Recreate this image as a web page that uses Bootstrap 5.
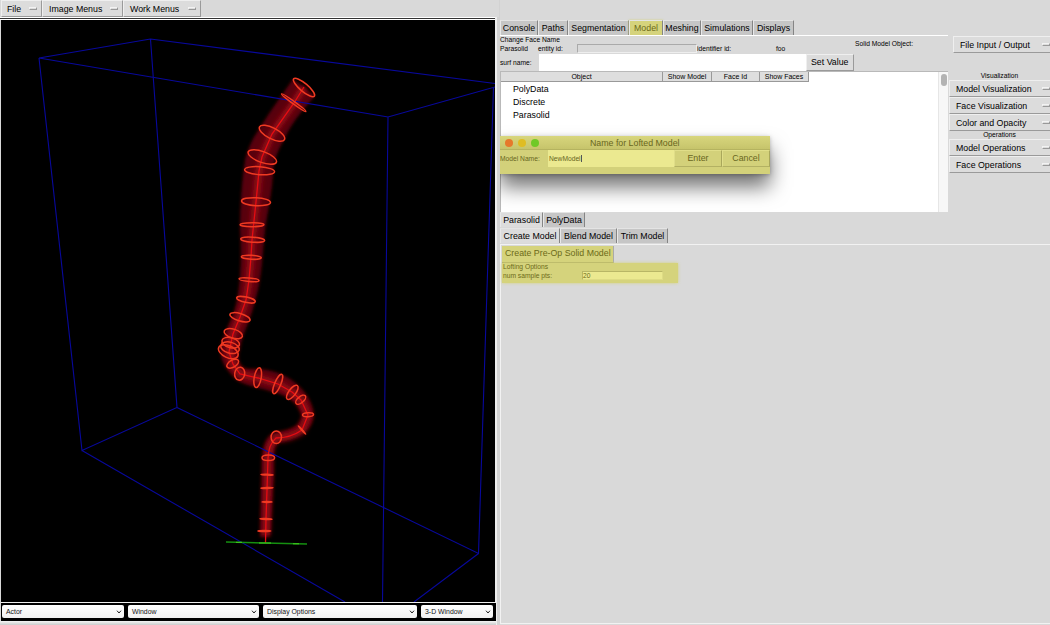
<!DOCTYPE html>
<html lang="en">
<head>
<meta charset="utf-8">
<title>Model workspace</title>
<link href="https://cdn.jsdelivr.net/npm/bootstrap@5.3.0/dist/css/bootstrap.min.css" rel="stylesheet">
<style>
body{width:1050px;height:625px;overflow:hidden;background:#d9d9d9;color:#000;font:8.8px/10px "Liberation Sans",Arial,sans-serif}
.menus{height:17px;width:499px;padding-left:1px}
.tk{height:17px;background:#dcdcdc;border:1px solid #efefef;border-right-color:#9a9a9a;border-bottom-color:#9a9a9a;padding:0 4px 0 5px;white-space:nowrap;color:#000}
.dash{width:8px;height:3px;background:#ddd;border:1px solid #f3f3f3;border-bottom-color:#999;border-right-color:#999;flex:none}
.left-pane{width:500px;height:625px;flex:none;background:linear-gradient(90deg,#d9d9d9 495px,#eee 495px,#eee 497px,#d2d2d2 497px)}
.menus{background:#d9d9d9}
.view{width:494px;height:582px;margin:0 0 0 1px;background:#000;display:block;flex:none}
.topline{height:3px;width:495px;border-top:1px solid #fff;border-bottom:1px solid #fff;background:#333;flex:none}
.combos{width:495px;height:19px;margin-left:1px;background:#000;border-top:1px solid #eee;padding:2px 1px 3px 1px;gap:4px;flex:none}
.combo{height:13px;background:linear-gradient(#fff,#f1f1f1);border-radius:2px;padding:0 2px 0 4px;font-size:6.9px;color:#111}
.bottomline{height:4px;background:linear-gradient(#f4f4f4,#ccc);width:496px;margin-top:0}
.right-pane{width:550px;flex:none}
.tabs{height:15px}
.tb{height:15px;background:#c6c6c6;border-top:1px solid #e4e4e4;border-left:1px solid #e8e8e8;border-right:1px solid #858585;text-align:center;white-space:nowrap;padding:0;line-height:14px;flex:none}
.tb.on{background:#dcdcdc}
.hl{background:#d5d37c!important;color:#6c6a18}
.tb.hl{box-shadow:0 0 2px #d5d37c}
.tiny{font-size:6.7px;line-height:8px;white-space:nowrap}
.main-col{width:448px;flex:none}
.ops{width:102px;flex:none;padding-left:1px}
.ops .tk{height:17px;padding:0 0 0 6px;border-right:0}
.tree{height:141px;background:#fff;border:1px solid #b9b9b9;border-width:1px 0 0 1px;position:relative}
.hd{height:10px;font-size:7px;line-height:9px;background:#dedede;border-bottom:1px solid #999;border-right:1px solid #999;text-align:center;white-space:nowrap}
.sbar{width:10px;background:#f7f7f7;border-left:1px solid #e6e6e6;padding:2px}
.thumb{width:6px;height:12px;border-radius:3px;background:#b3b3b3}
.dlg{position:absolute;left:-1px;top:64px;width:270px;height:38px;background:#d3d17a;box-shadow:0 13px 20px rgba(0,0,0,.55),0 1px 4px rgba(0,0,0,.25);color:#68661e;clip-path:inset(-20px -40px -38px 0)}
.dlg-title{height:14px;background:linear-gradient(#d8d67d,#c6c46b);border-bottom:1px solid #b5b35f}
.dot{width:8px;height:8px;border-radius:50%}
.dlg-btn{height:17px;border:1px solid #e0de89;border-right-color:#a9a75b;border-bottom-color:#b3b163;text-align:center;line-height:15px}
.field{background:#ebe990}
</style>
</head>
<body>
<div class="d-flex">
<div class="left-pane d-flex flex-column">
  <div class="menus d-flex flex-shrink-0">
    <div class="tk d-flex align-items-center justify-content-between" style="width:41px">File<i class="dash"></i></div>
    <div class="tk d-flex align-items-center justify-content-between" style="width:81px;padding-left:6px">Image Menus<i class="dash"></i></div>
    <div class="tk d-flex align-items-center justify-content-between" style="width:78px;padding-left:6px">Work Menus<i class="dash"></i></div>
  </div>
  <div class="topline"></div>
  <svg class="view" viewBox="1 20 494 582">
    <defs>
      <filter id="soft" x="-20%" y="-20%" width="140%" height="140%"><feGaussianBlur stdDeviation="1.6"/></filter>
      <filter id="core" x="-20%" y="-20%" width="140%" height="140%"><feGaussianBlur stdDeviation="2.5"/></filter>
    </defs>
    <path filter="url(#soft)" fill="#58040c" d="M293 79L315 96C299 114 290 126 284 140C276 154 273 164 273 175C271 200 267 215 265 230C262 260 262 280 254 305C250 322 242 334 240 350C236 362 241 369 249 369C267 367 288 374 300 387C313 400 318 417 309 428C302 436 287 440 278 442C272 447 274 460 274 475L270 537L260 537L262 465C262 445 266 435 277 432C290 430 301 425 302 416C298 402 287 395 272 392C256 386 240 386 233 376C225 368 218 358 221 344C225 330 232 320 235 308C240 290 242 260 240 230C240 205 242 180 245 160C250 140 260 128 270 112Z"/>
    <path filter="url(#core)" fill="none" stroke="#8c0812" stroke-width="8" d="M304 87L294 103L272 134L262 157L259 171L256 202L252 240L251 257L249 280L246 300L240 317L233 334L229 352L233 364L240 374L258 378L278 384L292 392L301 400L308 415L302 430C292 437 280 438 276 438C270 443 269 449 268 458L267 490L266 535"/>
    <path fill="none" stroke="#08089c" stroke-width="1.100" d="M39 58L150.500 39L495 83.500M39 58L388 117L495 87M39 58L82 450.500L177 407.500L150.500 39M177 407.500L478.500 553.500L493.500 87M388 117L382.500 602M82 450.500L345 602M478.500 553.500L414 602"/>
    <path fill="none" stroke="#e50c12" stroke-width="1.300" d="M304 87L294 103L272 134L262 157L259 171L256 202L252 240L251 257L249 280L246 300L240 317L233 334L229 352L233 364L240 374L258 378L278 384L292 392L301 400L308 415L302 430C292 437 280 438 276 438C270 443 269 449 268 458L267 490L266 519L265.500 543"/>
    <g id="rings" fill="none" stroke="#f03a22" stroke-width="1.500"></g>
    <path d="M226 542L307 544" stroke="#159010" stroke-width="1.400"/><path d="M236 542.300h6M259 543h12M293 543.800h6" stroke="#45d020" stroke-width="1"/>
  </svg>
  <div class="combos d-flex">
    <div class="combo d-flex align-items-center justify-content-between" style="width:122px">Actor<svg width="6" height="4"><path d="M1 .7L3 3L5 .7" fill="none" stroke="#222"/></svg></div>
    <div class="combo d-flex align-items-center justify-content-between" style="width:131px">Window<svg width="6" height="4"><path d="M1 .7L3 3L5 .7" fill="none" stroke="#222"/></svg></div>
    <div class="combo d-flex align-items-center justify-content-between" style="width:154px">Display Options<svg width="6" height="4"><path d="M1 .7L3 3L5 .7" fill="none" stroke="#222"/></svg></div>
    <div class="combo d-flex align-items-center justify-content-between" style="width:72px">3-D Window<svg width="6" height="4"><path d="M1 .7L3 3L5 .7" fill="none" stroke="#222"/></svg></div>
  </div>
  <div class="bottomline"></div>
</div>
<div class="right-pane">
  <div class="tabs d-flex" style="margin:20px 0 0 0">
    <div class="tb" style="width:38px">Console</div><div class="tb" style="width:30px">Paths</div><div class="tb" style="width:61px">Segmentation</div><div class="tb hl" style="width:34px">Model</div><div class="tb" style="width:38px">Meshing</div><div class="tb" style="width:52px">Simulations</div><div class="tb" style="width:41px">Displays</div>
  </div>
  <div class="d-flex">
    <div class="main-col">
      <div class="d-flex border-top border-white">
        <div style="width:355px" class="tiny">
          <div style="height:8px">Change Face Name</div>
          <div class="d-flex" style="height:10px;line-height:10px"><span style="width:38px">Parasolid</span><span style="width:39px">entity id:</span><span style="width:120px;height:9px;border:1px solid #aaa;border-right-color:#eee;border-bottom-color:#eee"></span><span style="width:79px">identifier id:</span><span>foo</span></div>
        </div>
        <span class="tiny" style="padding-top:4px">Solid Model Object:</span>
      </div>
      <div class="d-flex" style="height:17px"><span class="tiny" style="width:39px;line-height:17px">surf name:</span><div class="bg-white" style="width:267px"></div><div class="tk" style="width:48px;padding:0 4px;line-height:15px">Set Value</div></div>
      <div class="tree d-flex">
        <div class="flex-grow-1">
          <div class="d-flex"><div class="hd" style="width:162px">Object</div><div class="hd" style="width:49px">Show Model</div><div class="hd" style="width:48px">Face Id</div><div class="hd" style="width:49px">Show Faces</div></div>
          <div style="padding:1px 0 0 12px;line-height:13px">PolyData<br>Discrete<br>Parasolid</div>
        </div>
        <div class="sbar"><div class="thumb"></div></div>
        <div class="dlg">
          <div class="dlg-title d-flex align-items-center"><i class="dot" style="background:#e6792b;margin-left:5px"></i><i class="dot" style="background:#dfbd22;margin-left:5px"></i><i class="dot" style="background:#70c927;margin-left:5px"></i><span class="flex-grow-1" style="padding-left:51px">Name for Lofted Model</span></div>
          <div class="d-flex"><span class="tiny" style="width:48px;line-height:17px">Model Name:</span><div class="field tiny" style="width:126px;line-height:17px;padding-left:1px">NewModel<span style="border-right:1px solid #555"></span></div><div class="dlg-btn" style="width:48px">Enter</div><div class="dlg-btn" style="width:48px">Cancel</div></div>
        </div>
      </div>
    </div>
    <div class="ops">
      <div class="tk d-flex align-items-center justify-content-between" style="margin:1px 0 0 4px">File Input / Output<i class="dash"></i></div>
      <div class="tiny text-center" style="height:9px;margin-top:18px;line-height:9px">Visualization</div>
      <div class="tk d-flex align-items-center justify-content-between">Model Visualization<i class="dash"></i></div>
      <div class="tk d-flex align-items-center justify-content-between">Face Visualization<i class="dash"></i></div>
      <div class="tk d-flex align-items-center justify-content-between">Color and Opacity<i class="dash"></i></div>
      <div class="tiny text-center">Operations</div>
      <div class="tk d-flex align-items-center justify-content-between">Model Operations<i class="dash"></i></div>
      <div class="tk d-flex align-items-center justify-content-between">Face Operations<i class="dash"></i></div>
    </div>
  </div>
  <div class="tabs d-flex"><div class="tb on" style="width:43px">Parasolid</div><div class="tb" style="width:42px">PolyData</div></div>
  <div class="tabs d-flex" style="margin-top:1px"><div class="tb on" style="width:60px">Create Model</div><div class="tb" style="width:57px">Blend Model</div><div class="tb" style="width:51px">Trim Model</div></div>
  <div style="height:380px;border:1px solid #f2f2f2;border-width:1px 0 1px 1px;margin-top:1px;padding:1px 0 0 1px">
    <div class="hl" style="width:112px;height:17px;line-height:15px;padding-left:3px;border-right:1px solid #aaa;border-bottom:1px solid #b0ae62">Create Pre-Op Solid Model</div>
    <div class="hl tiny" style="width:176px;height:20px;padding:0 0 0 1px;box-shadow:0 0 3px #d5d37c"><div>Lofting Options</div><div class="d-flex"><span style="width:79px;line-height:9px">num sample pts:</span><span class="field" style="width:81px;height:9px;border:1px solid #b8b666;border-right-color:#dedc85;border-bottom-color:#dedc85;line-height:8px">20</span></div></div>
  </div>
</div>
</div>
<script src="https://cdn.jsdelivr.net/npm/bootstrap@5.3.0/dist/js/bootstrap.bundle.min.js"></script>
<script>
// Contour rings along the vessel: centre x, centre y, rx, ry, rotation
const rings=[[304,87.5,13.5,4,40],[293.7,102.7,15,1.2,36],[272,133.3,14,5.5,27],[262.3,157,15,5.5,20],[259.6,170.7,15,4,4],[256,201.7,14.5,4,3],[252,224.7,12,2,0],[252.7,239.7,12,2.5,4],[251.3,257.3,10,2,3],[249,279.7,10,1.7,5],[246,299.7,9.5,2.7,12],[240,317.3,10.5,3.7,17],[233.3,333.7,9.5,4.5,17],[230.7,342.7,9,5,15],[230,347.7,9.5,5.5,15],[228.3,351.7,10.5,6,25],[232.7,363.7,6.5,3.5,-30],[239.7,373.7,5,6.5,10],[257.7,377.7,3.5,10,10],[277.7,384,3,10.5,23],[292.3,392.3,3.5,8.5,37],[300.7,399.7,3,6,50],[308,414.7,5.5,2,-3],[302,430,5.5,.4,48],[276.3,437.3,5.2,6.3,0],[268.3,457.7,6.3,2.8,0],[267,474.7,6,.4,2],[267,488,6,.4,-2],[267,502,5,.4,0],[266,519,6,.4,3],[264.3,531,6.5,.5,0]];
document.getElementById('rings').innerHTML=rings.map(r=>`<ellipse cx="${r[0]}" cy="${r[1]}" rx="${r[2]}" ry="${r[3]}" transform="rotate(${r[4]} ${r[0]} ${r[1]})"/>`).join('');
</script>
</body>
</html>
